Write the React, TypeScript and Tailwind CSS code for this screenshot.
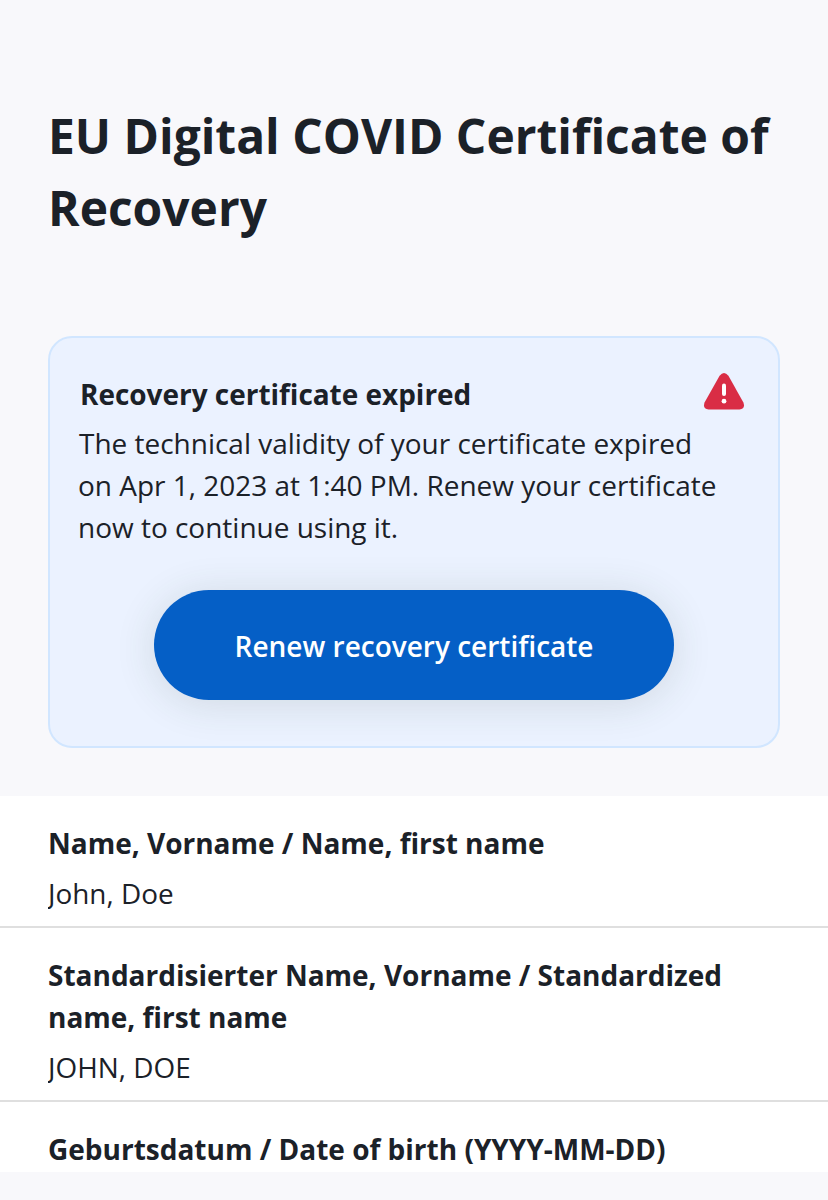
import React from "react";

const fields = [
  { label: "Name, Vorname / Name, first name", value: "John, Doe" },
  { label: "Standardisierter Name, Vorname / Standardized name, first name", value: "JOHN, DOE" },
];

function WarningIcon() {
  return (
    <svg className="mt-[34px] mr-[33px] h-[38px] w-[42px] shrink-0" viewBox="0 0 42 38" fill="none">
      <path d="M16.6 3.7Q21-1.7 25.4 3.7L40.3 30.2Q42.8 36.6 36.5 37.5H5.5Q-.8 36.6 1.7 30.2Z" fill="#d92d45" />
      <path d="M21 13.5V22" stroke="white" strokeWidth="4" strokeLinecap="round" />
      <circle cx="21" cy="29.2" r="2.4" fill="white" />
    </svg>
  );
}

export default function App() {
  return (
    <main className="h-[1200px] w-[828px] overflow-hidden bg-[#f8f8fb] font-['Open_Sans',sans-serif] text-[#1b2128]">
      <h1 className="h-[336px] pt-[100px] pl-12 text-[47.95px] leading-[72px] font-bold">
        EU Digital COVID Certificate of<br />Recovery
      </h1>
      <section className="mx-12 h-[412px] rounded-3xl border-2 border-[#d1e6ff] bg-[#ebf2ff]">
        <div className="flex h-[84px] justify-between pl-[30px]">
          <h2 className="pt-[35px] text-[27.95px] leading-[42px] font-bold">Recovery certificate expired</h2>
          <WarningIcon />
        </div>
        <p className="pl-7 text-[27.98px] leading-[42px]">
          <span className="pl-px">The technical validity of your certificate expired</span><br />
          on Apr 1, 2023 at 1:40 PM. Renew your certificate<br />
          now to continue using it.
        </p>
        <button className="mx-auto mt-[42px] flex h-[110px] w-[520px] items-center justify-center rounded-full bg-[#055fc6] pt-0.5 text-[28px] leading-[42px] font-semibold text-white shadow-[0_4px_40px_rgba(50,70,50,0.14)]">
          Renew recovery certificate
        </button>
      </section>
      <section className="mt-12 h-[376px] overflow-hidden bg-white text-[28px] leading-[42px]">
        {fields.map((field) => (
          <div key={field.label} className="border-b-2 border-[#dfdfdf] px-12 pt-[26px] pb-3">
            <h3 className="font-bold">{field.label}</h3>
            <p className="mt-2 overflow-hidden text-[27.9px]">{field.value}</p>
          </div>
        ))}
        <h3 className="px-12 pt-[26px] font-bold">Geburtsdatum / Date of birth (YYYY-MM-DD)</h3>
      </section>
    </main>
  );
}
